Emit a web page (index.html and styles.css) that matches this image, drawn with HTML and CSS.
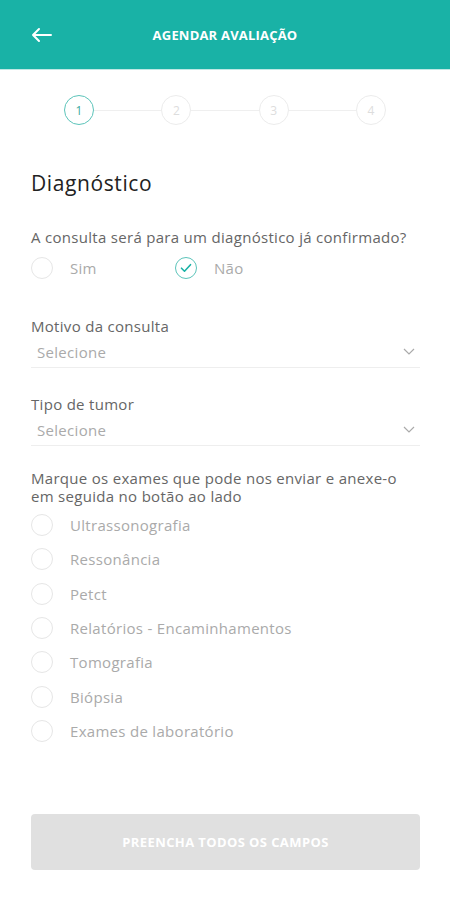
FILE: index.html
```html
<!DOCTYPE html>
<html lang="pt-BR">
<head>
  <meta charset="UTF-8" />
  <meta name="viewport" content="width=device-width, initial-scale=1.0" />
  <title>Agendar Avaliação</title>
  <link rel="stylesheet" href="styles.css">
</head>
<body>

  <!-- Cabeçalho -->
  <header class="topo">
    <button class="voltar" title="Voltar">
      <svg width="22" height="16" viewBox="0 0 22 16" fill="none" stroke="#fff" stroke-width="2" stroke-linecap="round" stroke-linejoin="round">
        <path d="M20 8H2M8 2L2 8l6 6" />
      </svg>
    </button>
    <h1>Agendar Avaliação</h1>
  </header>

  <!-- Passos -->
  <div class="passos">
    <span class="passo ativo">1</span>
    <span class="linha"></span>
    <span class="passo">2</span>
    <span class="linha"></span>
    <span class="passo">3</span>
    <span class="linha"></span>
    <span class="passo">4</span>
  </div>

  <main class="conteudo">
    <h2>Diagnóstico</h2>

    <p class="pergunta">A consulta será para um diagnóstico já confirmado?</p>
    <div class="opcoes">
      <label class="opcao"><span class="bolinha"></span>Sim</label>
      <label class="opcao"><span class="bolinha marcada">
        <svg width="12" height="10" viewBox="0 0 12 10" fill="none" stroke="#19b2a6" stroke-width="1.6" stroke-linecap="round" stroke-linejoin="round"><path d="M1.5 5.2l3 3 6-6.5" /></svg>
      </span>Não</label>
    </div>

    <div class="campo">
      <span class="rotulo">Motivo da consulta</span>
      <div class="select">
        <span>Selecione</span>
        <svg width="12" height="7" viewBox="0 0 12 7" fill="none" stroke="#aaa" stroke-width="1.2"><path d="M1 1l5 5 5-5" /></svg>
      </div>
    </div>

    <div class="campo">
      <span class="rotulo">Tipo de tumor</span>
      <div class="select">
        <span>Selecione</span>
        <svg width="12" height="7" viewBox="0 0 12 7" fill="none" stroke="#aaa" stroke-width="1.2"><path d="M1 1l5 5 5-5" /></svg>
      </div>
    </div>

    <p class="pergunta dupla">Marque os exames que pode nos enviar e anexe-o em seguida no botão ao lado</p>
    <ul class="exames">
      <li><span class="bolinha"></span>Ultrassonografia</li>
      <li><span class="bolinha"></span>Ressonância</li>
      <li><span class="bolinha"></span>Petct</li>
      <li><span class="bolinha"></span>Relatórios - Encaminhamentos</li>
      <li><span class="bolinha"></span>Tomografia</li>
      <li><span class="bolinha"></span>Biópsia</li>
      <li><span class="bolinha"></span>Exames de laboratório</li>
    </ul>

    <button class="enviar" disabled>Preencha todos os campos</button>
  </main>

</body>
</html>
```

FILE: styles.css
```css
body {
  margin: 0;
  font-family: "Open Sans", Arial, sans-serif;
  font-size: 15px;
  letter-spacing: 0.3px;
  background-color: #fff;
  color: #555;
}

.topo {
  display: flex;
  align-items: center;
  justify-content: center;
  position: relative;
  height: 69px;
  background-color: #19b2a6;
  border-bottom: 1px solid #bfe8e4;
}

.topo h1 {
  margin: 0;
  color: #fff;
  font-size: 13px;
  font-weight: 700;
  letter-spacing: 0.2px;
  text-transform: uppercase;
}

.voltar {
  position: absolute;
  left: 31px;
  top: 27px;
  background: none;
  border: none;
  padding: 0;
  cursor: pointer;
}

.passos {
  display: flex;
  align-items: center;
  margin: 25px 64px 0;
}

.passo {
  width: 28px;
  height: 28px;
  border: 1px solid #ececec;
  border-radius: 50%;
  display: flex;
  align-items: center;
  justify-content: center;
  font-size: 12px;
  letter-spacing: 0;
  color: #ddd;
}

.passo.ativo {
  border-color: #5cc4ba;
  color: #3aa99e;
}

.linha {
  flex: 1;
  height: 1px;
  background-color: #efefef;
}

.conteudo {
  padding: 0 30px 0 31px;
}

h2 {
  margin: 44px 0 0;
  font-size: 21px;
  line-height: 28px;
  font-weight: 400;
  letter-spacing: 0.6px;
  color: #222;
}

.pergunta {
  margin: 30px 0 0;
  line-height: 20px;
  color: #666;
}

.pergunta.dupla {
  margin-top: 23px;
  line-height: 18px;
}

.opcoes {
  display: flex;
  margin-top: 10px;
}

.opcao {
  display: flex;
  align-items: center;
  width: 144px;
  color: #aaa;
}

.bolinha {
  width: 20px;
  height: 20px;
  border: 1px solid #e6e6e6;
  border-radius: 50%;
  margin-right: 17px;
  display: flex;
  align-items: center;
  justify-content: center;
  flex-shrink: 0;
}

.bolinha.marcada {
  border-color: #5cc4ba;
}

.campo {
  margin-top: 26px;
}

.opcoes + .campo {
  margin-top: 37px;
}

.rotulo {
  display: block;
  line-height: 20px;
  color: #666;
}

.select {
  display: flex;
  align-items: center;
  justify-content: space-between;
  height: 31px;
  padding: 0 5px 0 6px;
  border-bottom: 1px solid #eee;
  color: #aaa;
}

.exames {
  list-style: none;
  margin: 3px 0 0;
  padding: 0;
}

.exames li {
  display: flex;
  align-items: center;
  height: 34.3px;
  color: #aaa;
}

.enviar {
  display: block;
  width: 100%;
  height: 56px;
  margin-top: 66px;
  background-color: #e0e0e0;
  border: none;
  border-radius: 4px;
  color: #fff;
  font-family: inherit;
  font-size: 13px;
  font-weight: 700;
  letter-spacing: 0.4px;
  text-transform: uppercase;
}
```
